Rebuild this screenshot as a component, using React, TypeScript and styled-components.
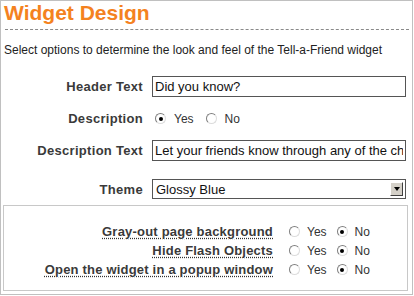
import { Fragment, useState } from "react";
import styled, { createGlobalStyle } from "styled-components";

const Global = createGlobalStyle`
  html, body {
    margin: 0;
    padding: 0;
    background: #ffffff;
  }
  body {
    font-family: "Liberation Sans", Arial, sans-serif;
    color: #333333;
  }
`;

const Frame = styled.div`
  width: 413px;
  height: 295px;
  box-sizing: border-box;
  border: 1px solid #c0c0c0;
  overflow: hidden;
  background: #ffffff;
`;

const Title = styled.h1`
  margin: 0 0 4px 3px;
  font-size: 21px;
  line-height: 24px;
  font-weight: 700;
  color: #f4821f;
`;

const Divider = styled.hr`
  margin: 0 3px 0 4px;
  border: none;
  border-top: 1px dashed #8a8a8a;
  height: 0;
`;

const Intro = styled.p`
  margin: 13px 0 0 3px;
  font-size: 12px;
  line-height: 15px;
  color: #222222;
  white-space: nowrap;
`;

const Form = styled.div`
  display: grid;
  grid-template-columns: 142px 254px;
  column-gap: 9px;
  row-gap: 11px;
  align-items: center;
  margin-top: 18px;
`;

const Label = styled.label<{ $gap?: boolean }>`
  justify-self: end;
  font-size: 13px;
  font-weight: 700;
  letter-spacing: 0.3px;
  color: #3a3a3a;
  white-space: nowrap;
  margin-top: ${(p) => (p.$gap ? "7px" : "0")};
`;

const TextInput = styled.input`
  box-sizing: border-box;
  width: 254px;
  height: 21px;
  padding: 0 2px;
  border: 1px solid #555555;
  border-radius: 0;
  font-family: "Liberation Sans", Arial, sans-serif;
  font-size: 13px;
  color: #111111;
  outline: none;
`;

const RadioGroup = styled.div`
  display: flex;
  align-items: center;
  height: 21px;
  padding-left: 3px;
`;

const RadioLabel = styled.label<{ $tight?: boolean }>`
  display: inline-flex;
  align-items: center;
  gap: ${(p) => (p.$tight ? "7px" : "8px")};
  margin-right: ${(p) => (p.$tight ? "10px" : "12px")};
  font-size: 12px;
  color: #333333;
  cursor: pointer;
`;

const RadioDot = styled.span<{ $on: boolean }>`
  position: relative;
  box-sizing: border-box;
  width: 11px;
  height: 11px;
  border-radius: 50%;
  border: 1px solid;
  border-color: #7f7f7f #dcdcdc #dcdcdc #7f7f7f;
  background: #ffffff;

  &::after {
    content: "";
    position: absolute;
    left: 2.5px;
    top: 2.5px;
    width: 4px;
    height: 4px;
    border-radius: 50%;
    background: #000000;
    display: ${(p) => (p.$on ? "block" : "none")};
  }
`;

const HiddenRadio = styled.input`
  display: none;
`;

const SelectWrap = styled.div`
  position: relative;
  width: 254px;
  height: 20px;
  margin-top: 7px;
`;

const Select = styled.select`
  box-sizing: border-box;
  width: 100%;
  height: 20px;
  padding: 0 18px 0 3px;
  border: 1px solid #555555;
  border-radius: 0;
  background: #ffffff;
  font-family: "Liberation Sans", Arial, sans-serif;
  font-size: 13px;
  color: #111111;
  appearance: none;
  outline: none;
`;

const DropButton = styled.span`
  position: absolute;
  right: 3px;
  top: 3px;
  box-sizing: border-box;
  width: 13px;
  height: 14px;
  background: #d4d0c8;
  border: 1px solid;
  border-color: #ffffff #404040 #404040 #ffffff;
  pointer-events: none;

  &::after {
    content: "";
    position: absolute;
    left: 2.5px;
    top: 4px;
    border-left: 3.5px solid transparent;
    border-right: 3.5px solid transparent;
    border-top: 4px solid #000000;
  }
`;

const OptionsBox = styled.div`
  box-sizing: border-box;
  width: 405px;
  height: 86px;
  margin: 6px 0 0 2px;
  padding: 16px 0 0 0;
  border: 1px solid #c8c8c8;
  display: grid;
  grid-template-columns: 269px auto;
  grid-auto-rows: 19px;
  column-gap: 16px;
  align-items: center;
`;

const OptionLabel = styled.span`
  justify-self: end;
  font-size: 13px;
  font-weight: 700;
  color: #3a3a3a;
  white-space: nowrap;
  letter-spacing: 0.2px;
  text-decoration: underline dotted #333333;
  text-underline-offset: 2px;
`;

const OptionRadios = styled.div`
  display: flex;
  align-items: center;
`;

type YesNoProps = {
  name: string;
  value: boolean;
  onChange: (v: boolean) => void;
  tight?: boolean;
};

const YesNo = ({ name, value, onChange, tight }: YesNoProps) => (
  <>
    <RadioLabel $tight={tight}>
      <HiddenRadio type="radio" name={name} checked={value} onChange={() => onChange(true)} />
      <RadioDot $on={value} />
      Yes
    </RadioLabel>
    <RadioLabel $tight={tight}>
      <HiddenRadio type="radio" name={name} checked={!value} onChange={() => onChange(false)} />
      <RadioDot $on={!value} />
      No
    </RadioLabel>
  </>
);

const options = [
  { key: "grayout", label: "Gray-out page background" },
  { key: "flash", label: "Hide Flash Objects" },
  { key: "popup", label: "Open the widget in a popup window" },
];

const App = () => {
  const [header, setHeader] = useState("Did you know?");
  const [showDesc, setShowDesc] = useState(true);
  const [descText, setDescText] = useState(
    "Let your friends know through any of the channels below"
  );
  const [theme, setTheme] = useState("Glossy Blue");
  const [flags, setFlags] = useState<Record<string, boolean>>({
    grayout: false,
    flash: false,
    popup: false,
  });

  return (
    <>
      <Global />
      <Frame>
        <Title>Widget Design</Title>
        <Divider />
        <Intro>Select options to determine the look and feel of the Tell-a-Friend widget</Intro>

        <Form>
          <Label htmlFor="header-text">Header Text</Label>
          <TextInput id="header-text" value={header} onChange={(e) => setHeader(e.target.value)} />

          <Label>Description</Label>
          <RadioGroup>
            <YesNo name="desc" value={showDesc} onChange={setShowDesc} />
          </RadioGroup>

          <Label htmlFor="desc-text">Description Text</Label>
          <TextInput id="desc-text" value={descText} onChange={(e) => setDescText(e.target.value)} />

          <Label htmlFor="theme" $gap>
            Theme
          </Label>
          <SelectWrap>
            <Select id="theme" value={theme} onChange={(e) => setTheme(e.target.value)}>
              <option>Glossy Blue</option>
              <option>Glossy Black</option>
              <option>Plain White</option>
            </Select>
            <DropButton />
          </SelectWrap>
        </Form>

        <OptionsBox>
          {options.map((o) => (
            <Fragment key={o.key}>
              <OptionLabel>{o.label}</OptionLabel>
              <OptionRadios>
                <YesNo
                  tight
                  name={o.key}
                  value={flags[o.key]}
                  onChange={(v) => setFlags({ ...flags, [o.key]: v })}
                />
              </OptionRadios>
            </Fragment>
          ))}
        </OptionsBox>
      </Frame>
    </>
  );
};

export default App;
